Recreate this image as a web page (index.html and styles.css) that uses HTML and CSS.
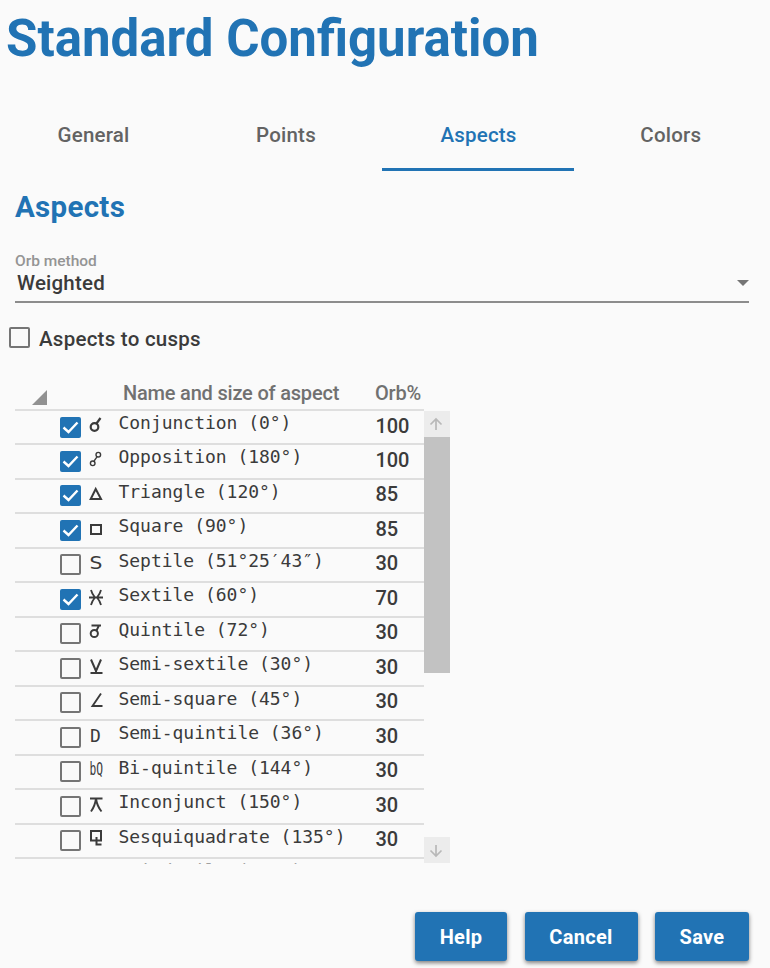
FILE: index.html
```
<!DOCTYPE html>
<html lang="en">
<head>
<meta charset="utf-8">
<title>Standard Configuration</title>
<link rel="stylesheet" href="styles.css">
</head>
<body>
<h1 class="title">Standard Configuration</h1>
<nav class="tabs">
  <div class="tab"><span>General</span></div>
  <div class="tab"><span>Points</span></div>
  <div class="tab active"><span>Aspects</span></div>
  <div class="tab"><span>Colors</span></div>
</nav>
<main class="content">
  <h2 class="heading">Aspects</h2>
  <div class="select">
    <div class="select-label">Orb method</div>
    <div class="select-value"><span>Weighted</span><i class="caret"></i></div>
  </div>
  <label class="option"><i class="box"></i><span>Aspects to cusps</span></label>
  <div class="grid-head">
    <i class="corner"></i><span class="head-name">Name and size of aspect</span><span class="head-orb">Orb%</span>
  </div>
  <div class="grid">
    <div class="rows" id="rows"></div>
    <div class="scrollbar">
      <div class="arrow"><svg viewBox="0 0 26 26"><path d="M12 19V8M6.5 13.5L12 8l5.500 5.500"/></svg></div>
      <div class="thumb"></div>
      <div class="arrow down"><svg viewBox="0 0 26 26"><path d="M12 8v11M6.500 13.500L12 19l5.500-5.500"/></svg></div>
    </div>
  </div>
</main>
<footer class="actions">
  <button class="btn help">Help</button>
  <button class="btn cancel">Cancel</button>
  <button class="btn save">Save</button>
</footer>
<script src="script.js"></script>
</body>
</html>
```
FILE: styles.css
```
* { box-sizing: border-box; }
body {
  margin: 0;
  width: 770px;
  height: 968px;
  overflow: hidden;
  background: #fafafa;
  color: #3b3b3b;
  font: 500 20px/24px Roboto, sans-serif;
}
.title {
  margin: 0;
  height: 99px;
  padding: 9px 0 0 6px;
  color: #2173b4;
  font-size: 51px;
  font-weight: 700;
  line-height: 60px;
  white-space: nowrap;
}
.tabs { display: flex; height: 72px; }
.tab {
  width: 191px;
  padding: 24px 0 0 1px;
  text-align: center;
  color: #636363;
  font-size: 20.500px;
  letter-spacing: .2px;
}
.tab:first-child { padding-right: 5px; }
.tab:nth-child(2) { padding-right: 2px; }
.tab.active {
  width: 192px;
  color: #2173b4;
  border-bottom: 3px solid #2173b4;
}
.tab:last-child { width: 192.500px; }
.content { padding: 0 21px 0 15px; }
.heading {
  margin: 0;
  height: 82px;
  padding-top: 19px;
  color: #2173b4;
  font-size: 29.500px;
  font-weight: 700;
  line-height: 34px;
  letter-spacing: .3px;
}
.select { height: 50px; border-bottom: 2px solid #8c8c8c; }
.select-label { font-size: 15.500px; line-height: 17px; color: #949494; }
.select-value {
  display: flex;
  justify-content: space-between;
  align-items: center;
  padding-left: 2px;
  height: 26px;
  font-size: 20.500px;
  letter-spacing: .2px;
}
.caret {
  border: 6px solid transparent;
  border-top-color: #757575;
  border-bottom: 0;
}
.option {
  display: flex;
  margin: 24px 0 0 -6px;
  height: 24px;
  font-size: 20.500px;
  letter-spacing: .25px;
}
.option span { margin-left: 9px; }
.box {
  flex: none;
  display: block;
  width: 21px;
  height: 21px;
  border: 2px solid #757575;
  border-radius: 2px;
}
.box.checked { border: 0; background: #2173b4; }
.box svg { display: block; width: 21px; height: 21px; }
.box path { fill: none; stroke: #fff; stroke-width: 2.4; }
.grid-head {
  display: flex;
  height: 58px;
  padding-top: 30px;
  color: #717171;
  letter-spacing: -.2px;
}
.corner {
  width: 15px;
  height: 15px;
  margin: 9px 76px 0 17px;
  background: #919191;
  clip-path: polygon(100% 0, 100% 100%, 0 100%);
}
.head-name { width: 252px; }
.grid { display: flex; height: 455px; }
.rows { width: 409px; overflow: hidden; border-top: 2px solid #dfdfdf; }
.row {
  display: grid;
  grid-template-columns: 73px 30.500px 257px 1fr;
  height: 34.490px;
  border-bottom: 2px solid #dedede;
}
.row .box { margin: 5.500px 0 0 45px; }
.glyph { width: 18px; height: 20px; margin-top: 3.500px; overflow: visible; }
.glyph path, .glyph circle { fill: none; stroke: #3b3b3b; stroke-width: 2; }
.glyph text { fill: #3b3b3b; font-family: "DejaVu Sans Mono", monospace; font-weight: 400; }
.name { font: 400 18px/21px "DejaVu Sans Mono", monospace; padding-top: 1px; white-space: nowrap; letter-spacing: -.03px; }
.row:last-child .name { padding-top: .500px; color: #a0a0a0; }
.orb { padding-top: 2.500px; letter-spacing: -.1px; }
.scrollbar { width: 26px; padding: 2px 0 1px; display: flex; flex-direction: column; }
.arrow { height: 26px; background: #ececec; }
.arrow svg { display: block; width: 26px; height: 26px; fill: none; stroke: #b8b8b8; stroke-width: 1.700; }
.thumb { height: 236px; background: #c2c2c2; }
.down { margin-top: auto; }
.actions {
  display: flex;
  justify-content: flex-end;
  gap: 17.500px;
  padding: 48px 21px 0 0;
}
.btn {
  height: 49px;
  border: 0;
  border-radius: 3px;
  padding: 1px 0 0;
  background: #2173b4;
  color: #fff;
  font: 700 20px/24px Roboto, sans-serif;
  letter-spacing: .3px;
  box-shadow: 0 2px 4px rgba(0, 0, 0, .5);
}
.help { width: 92px; }
.cancel { width: 113px; }
.save { width: 94px; }
```
FILE: script.js
```
const aspects = [
  ["Conjunction (0°)", 100, true, '<circle cx="6.500" cy="12" r="3.800" style="stroke-width:2.200"/><path d="M8.500 8.500L12.500 3" style="stroke-width:2.200"/>'],
  ["Opposition (180°)", 100, true, '<circle cx="4.700" cy="14.300" r="2.300" style="stroke-width:1.400"/><circle cx="10.300" cy="5.700" r="2.300" style="stroke-width:1.400"/><path d="M6 12.200L9 7.800" style="stroke-width:1.400"/>'],
  ["Triangle (120°)", 85, true, '<path d="M7.700 6L2.700 16H13z"/>'],
  ["Square (90°)", 85, true, '<path d="M3 7h10v9H3z"/>'],
  ["Septile (51°25′43″)", 30, false, '<text x="1.300" y="16.500" font-size="18" textLength="13.500" lengthAdjust="spacingAndGlyphs">S</text>'],
  ["Sextile (60°)", 70, true, '<path stroke-linejoin="round" d="M1 10.500H15M3 3Q4 7 7 10.500Q4 14 3 18M13 3Q12 7 9 10.500Q12 14 13 18" style="stroke-width:1.800"/>'],
  ["Quintile (72°)", 30, false, '<circle cx="6.300" cy="12.500" r="3.600"/><path d="M8.500 9.500L11 4.500M3.500 4.500H13" style="stroke-width:1.900"/>'],
  ["Semi-sextile (30°)", 30, false, '<path stroke-linejoin="round" d="M3 3.500L8 15L13 3.500M2.500 17H14.500M8 13V17" style="stroke-width:2"/>'],
  ["Semi-square (45°)", 30, false, '<path d="M13 3.500L4.500 16H14.500" style="stroke-width:1.900"/>'],
  ["Semi-quintile (36°)", 30, false, '<text x="2" y="16.500" font-size="18">D</text>'],
  ["Bi-quintile (144°)", 30, false, '<text x="1.500" y="16" font-size="17.500" textLength="13.500" lengthAdjust="spacingAndGlyphs">bQ</text>'],
  ["Inconjunct (150°)", 30, false, '<path d="M2 4.500H14.500M8 4.500Q7 12 3 17.500M8 4.500Q9 12 13.500 17.500" style="stroke-width:1.900"/>'],
  ["Sesquiquadrate (135°)", 30, false, '<path d="M3 3h10v9.500H3zM8.500 9v7.500h5"/>'],
  ["Tri-decile (108°)", "", null, ""]
];

document.getElementById("rows").innerHTML = aspects.map(([name, orb, checked, glyph]) => {
  const box = checked === null ? "<i></i>" : checked
    ? '<i class="box checked"><svg viewBox="0 0 21 21"><path d="M3.500 10.500L8.500 15L17.500 5.500"/></svg></i>'
    : '<i class="box"></i>';
  return `<div class="row">${box}<svg class="glyph" viewBox="0 0 18 20">${glyph}</svg><span class="name">${name}</span><span class="orb">${orb}</span></div>`;
}).join("");
```
